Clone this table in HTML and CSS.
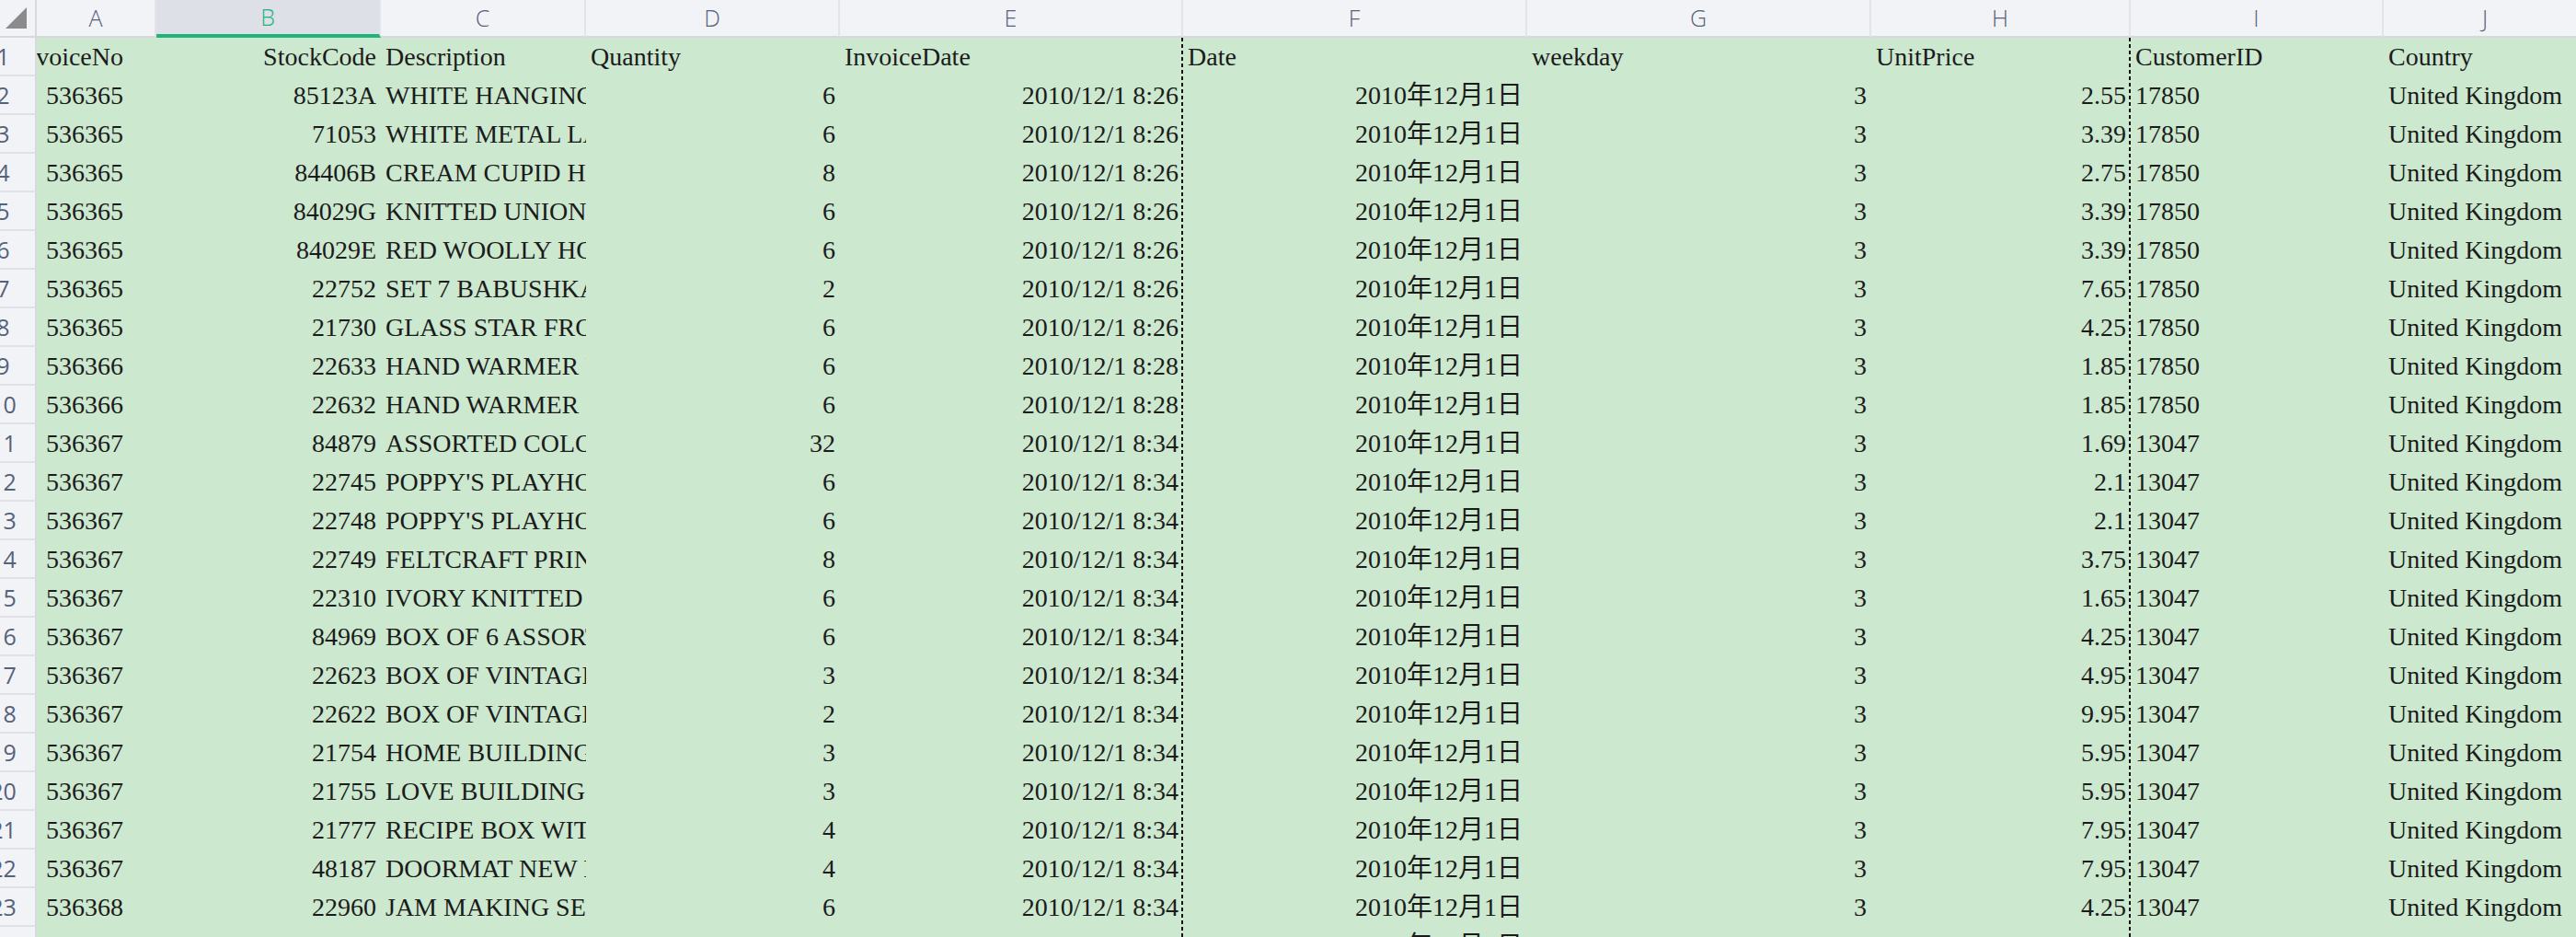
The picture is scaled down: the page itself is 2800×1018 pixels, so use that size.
FILE: index.html
```html
<!DOCTYPE html>
<html lang="zh-CN">
<head>
	<meta charset="UTF-8">
	<title>Online Retail</title>
	<link rel="stylesheet" href="styles.css">
</head>
<body>
	<div class="sheet" id="sheet">
		<div class="corner">
			<svg width="23" height="23" viewBox="0 0 23 23"><polygon points="23,0 23,23 0,23" fill="#8b8b8b"/></svg>
		</div>
		<div class="colhead">A</div>
		<div class="colhead on">B</div>
		<div class="colhead">C</div>
		<div class="colhead">D</div>
		<div class="colhead">E</div>
		<div class="colhead">F</div>
		<div class="colhead">G</div>
		<div class="colhead">H</div>
		<div class="colhead">I</div>
		<div class="colhead">J</div>
	</div>
	<script>
		var oSheet=document.getElementById('sheet');
		var head=['InvoiceNo','StockCode','Description','Quantity','InvoiceDate','Date','weekday','UnitPrice','CustomerID','Country'];
		var headCls=['num ca','num','','','brk','','','brk','',''];
		var rowCls=['num ca','num','','num','num brk','num','num','num brk','',''];
		var arr=[
			['536365','85123A','WHITE HANGING HEART T-LIGHT HOLDER','6','8:26','2.55','17850'],
			['536365','71053','WHITE METAL LANTERN','6','8:26','3.39','17850'],
			['536365','84406B','CREAM CUPID HEARTS COAT HANGER','8','8:26','2.75','17850'],
			['536365','84029G','KNITTED UNION FLAG HOT WATER BOTTLE','6','8:26','3.39','17850'],
			['536365','84029E','RED WOOLLY HOTTIE WHITE HEART.','6','8:26','3.39','17850'],
			['536365','22752','SET 7 BABUSHKA NESTING BOXES','2','8:26','7.65','17850'],
			['536365','21730','GLASS STAR FROSTED T-LIGHT HOLDER','6','8:26','4.25','17850'],
			['536366','22633','HAND WARMER UNION JACK','6','8:28','1.85','17850'],
			['536366','22632','HAND WARMER RED POLKA DOT','6','8:28','1.85','17850'],
			['536367','84879','ASSORTED COLOUR BIRD ORNAMENT','32','8:34','1.69','13047'],
			['536367','22745',"POPPY'S PLAYHOUSE BEDROOM",'6','8:34','2.1','13047'],
			['536367','22748',"POPPY'S PLAYHOUSE KITCHEN",'6','8:34','2.1','13047'],
			['536367','22749','FELTCRAFT PRINCESS CHARLOTTE DOLL','8','8:34','3.75','13047'],
			['536367','22310','IVORY KNITTED MUG COSY','6','8:34','1.65','13047'],
			['536367','84969','BOX OF 6 ASSORTED COLOUR TEASPOONS','6','8:34','4.25','13047'],
			['536367','22623','BOX OF VINTAGE JIGSAW BLOCKS','3','8:34','4.95','13047'],
			['536367','22622','BOX OF VINTAGE ALPHABET BLOCKS','2','8:34','9.95','13047'],
			['536367','21754','HOME BUILDING BLOCK WORD','3','8:34','5.95','13047'],
			['536367','21755','LOVE BUILDING BLOCK WORD','3','8:34','5.95','13047'],
			['536367','21777','RECIPE BOX WITH METAL HEART','4','8:34','7.95','13047'],
			['536367','48187','DOORMAT NEW ENGLAND','4','8:34','7.95','13047'],
			['536368','22960','JAM MAKING SET WITH JARS','6','8:34','4.25','13047'],
			['536368','22913','RED COAT RACK PARIS FASHION','3','8:34','4.95','13047']
		];
		function addCell(txt,cls){
			var oDiv=document.createElement('div');
			oDiv.className=cls;
			oDiv.textContent=txt;
			oSheet.appendChild(oDiv);
		}
		addCell('1','rowhead');
		for (var i = 0; i < head.length; i++) {
			addCell(head[i],'cell '+headCls[i]);
		}
		for (var i = 0; i < arr.length; i++) {
			var r=arr[i];
			var vals=[r[0],r[1],r[2],r[3],'2010/12/1 '+r[4],'2010年12月1日','3',r[5],r[6],'United Kingdom'];
			addCell(i+2,'rowhead');
			for (var j = 0; j < vals.length; j++) {
				addCell(vals[j],'cell '+rowCls[j]);
			}
		}
	</script>
</body>
</html>
```

FILE: styles.css
```css
*{
	margin: 0;
	padding: 0;
	box-sizing: border-box;
}
body,html{
	width: 100%;
	height: 100%;
	overflow: hidden;
	background: #cce8cf;
}
.sheet{
	display: grid;
	grid-template-columns: 40px 130px 244px 223px 276px 373px 374px 374px 282px 275px 222px;
	grid-template-rows: 41px;
	grid-auto-rows: 42px;
	font-family: "Liberation Serif", "Noto Sans CJK SC", serif;
	font-size: 28px;
	color: #1b1b1b;
}
.corner{
	background: #f2f3f7;
	border-right: 2px solid #d7d9de;
	border-bottom: 2px solid #d7d8dd;
	padding: 8px 0 0 6px;
}
.corner svg{
	display: block;
}
.colhead{
	background: #f2f3f7;
	border-right: 2px solid #e2e4e9;
	border-bottom: 2px solid #d7d8dd;
	font-family: "Open Sans", sans-serif;
	font-weight: 300;
	font-size: 25px;
	line-height: 39px;
	color: #56617a;
	text-align: center;
}
.colhead.on{
	background: #dde0e7;
	color: #1db57b;
	border-bottom: 4px solid #1fb57a;
	line-height: 37px;
}
/* the row numbers are centred a little left of the visible strip */
.rowhead{
	display: flex;
	justify-content: center;
	padding-right: 31px;
	background: #f2f3f7;
	border-right: 2px solid #d7d9de;
	border-bottom: 2px solid #dfe1e6;
	font-family: "Open Sans", sans-serif;
	font-size: 25px;
	line-height: 40px;
	color: #56617a;
	white-space: nowrap;
	overflow: hidden;
}
.cell{
	padding: 0 5px;
	line-height: 42px;
	white-space: nowrap;
	overflow: hidden;
}
.cell.num{
	display: flex;
	justify-content: flex-end;
}
.cell.ca{
	padding-right: 36px;
}
/* page break line */
.cell.brk{
	background-image: repeating-linear-gradient(to bottom, #111 0, #111 4px, transparent 4px, transparent 7px);
	background-size: 2px 100%;
	background-repeat: no-repeat;
	background-position: right top;
}
```
